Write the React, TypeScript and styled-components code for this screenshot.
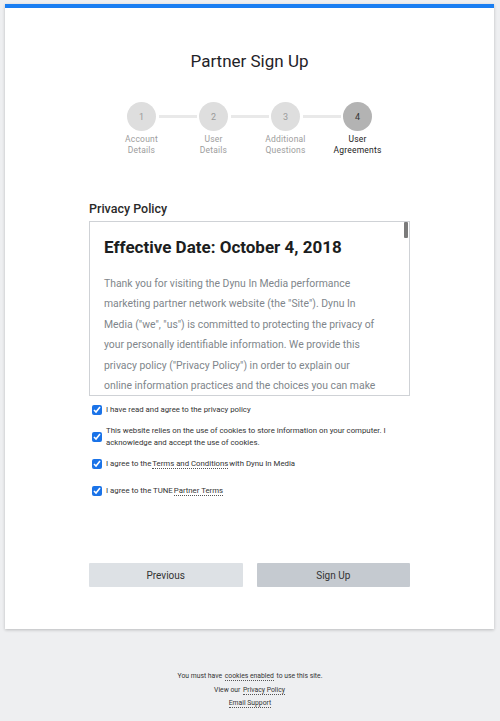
import styled, { createGlobalStyle } from 'styled-components';

const GlobalStyle = createGlobalStyle`
    html, body {
        margin: 0;
        padding: 0;
        background: #eeeff1;
        font-family: Roboto, 'Liberation Sans', sans-serif;
        color: #222;
    }
    * {
        box-sizing: border-box;
    }
`
const Card = styled.div`
    margin: 4px 6px 0 5px;
    background: #fff;
    border-top: 4px solid #1a7ef2;
    box-shadow: 0 1px 3px rgba(0, 0, 0, .22);
    padding: 43px 0 42px;
    display: flex;
    flex-direction: column;
    align-items: center;
`
const Title = styled.h1`
    margin: 0;
    font-size: 17px;
    font-weight: 400;
    line-height: 20px;
    color: #1f2328;
`
const Steps = styled.div`
    margin-top: 31px;
    display: grid;
    grid-template-columns: repeat(4, 72px);
`
const Step = styled.div<{ first?: boolean }>`
    position: relative;
    display: flex;
    flex-direction: column;
    align-items: center;
    &::before {
        content: '';
        display: ${props => props.first ? 'none' : 'block'};
        position: absolute;
        top: 13px;
        right: calc(50% + 17px);
        width: 38px;
        height: 3px;
        background: #e9e9e9;
    }
`
const Circle = styled.div<{ active?: boolean }>`
    width: 29px;
    height: 29px;
    border-radius: 50%;
    background: ${props => props.active ? '#b3b3b3' : '#dedede'};
    color: ${props => props.active ? '#333' : '#9a9a9a'};
    font-size: 9px;
    display: flex;
    align-items: center;
    justify-content: center;
`
const StepLabel = styled.div<{ active?: boolean }>`
    margin-top: 3px;
    font-size: 8.5px;
    line-height: 10.5px;
    text-align: center;
    color: ${props => props.active ? '#222' : '#9d9d9d'};
    letter-spacing: .2px;
`
const Content = styled.div`
    width: 321px;
    margin-top: 46px;
`
const SectionTitle = styled.h2`
    margin: 0 0 5px;
    font-size: 12.5px;
    font-weight: 500;
    line-height: 15px;
    color: #2a2a2a;
`
const PolicyFrame = styled.div`
    position: relative;
`
const PolicyBox = styled.div`
    height: 175px;
    border: 1px solid #cfd2d6;
    overflow-y: scroll;
    scrollbar-width: none;
    padding: 14px 30px 0 14px;
    &::-webkit-scrollbar {
        display: none;
    }
`
const ScrollThumb = styled.div`
    position: absolute;
    top: 1px;
    right: 2px;
    width: 4px;
    height: 16px;
    border-radius: 1px;
    background: #7b7b7b;
`
const PolicyHeading = styled.h3`
    margin: 0 0 16px;
    font-size: 17px;
    font-weight: 700;
    line-height: 22px;
    color: #1b1d20;
`
const PolicySubheading = styled.h4`
    margin: 10px 0 6px;
    font-size: 12px;
    font-weight: 700;
    line-height: 18px;
    color: #333;
`
const PolicyText = styled.p`
    margin: 0 0 10px;
    font-size: 10.4px;
    line-height: 20.4px;
    color: #80868b;
`
const Agreements = styled.div`
    margin-top: 8px;
    display: flex;
    flex-direction: column;
    gap: 9px;
    padding-left: 3px;
`
const Agreement = styled.label<{ spaced?: boolean }>`
    display: flex;
    align-items: center;
    gap: 4px;
    margin-top: ${props => props.spaced ? '6px' : '0'};
    font-size: 7.8px;
    line-height: 12px;
    color: #333;
`
const Check = styled.input`
    flex: none;
    width: 10px;
    height: 10px;
    margin: 0;
    accent-color: #1a73e8;
`
const DottedLink = styled.a`
    color: inherit;
    text-decoration: none;
    border-bottom: 1px dotted #555;
    margin: 0 1px;
`
const Buttons = styled.div`
    margin-top: 66px;
    display: grid;
    grid-template-columns: 1fr 1fr;
    gap: 14px;
`
const Button = styled.button<{ primary?: boolean }>`
    height: 24px;
    border: none;
    border-radius: 1px;
    background: ${props => props.primary ? '#c5cad0' : '#dde1e5'};
    color: #333;
    font-family: Roboto, 'Liberation Sans', sans-serif;
    font-size: 10px;
`
const Footer = styled.footer`
    padding: 41px 0 20px;
    display: flex;
    flex-direction: column;
    align-items: center;
    font-size: 6.8px;
    line-height: 13.5px;
    color: #333;
`

const steps = [
    { n: 1, label: ['Account', 'Details'] },
    { n: 2, label: ['User', 'Details'] },
    { n: 3, label: ['Additional', 'Questions'] },
    { n: 4, label: ['User', 'Agreements'] },
]

const policy = [
    { title: '', text: 'Thank you for visiting the Dynu In Media performance marketing partner network website (the "Site"). Dynu In Media ("we", "us") is committed to protecting the privacy of your personally identifiable information. We provide this privacy policy ("Privacy Policy") in order to explain our online information practices and the choices you can make about the way your information is collected and used.' },
    { title: 'Information We Collect', text: 'When you register as a partner, we collect information you provide to us, such as your name, company name, email address, mailing address, telephone number, tax information and payment details. We may also collect information about the websites, applications and other media through which you promote offers.' },
    { title: 'Automatically Collected Information', text: 'When you visit the Site, we and our service providers may automatically collect certain information about your device and usage, including your IP address, browser type, operating system, referring URLs, pages viewed, and the dates and times of your visits. We use cookies and similar technologies to collect this information.' },
    { title: 'How We Use Your Information', text: 'We use the information we collect to operate and maintain the partner network, to process your application, to track conversions and calculate payments, to communicate with you about your account, to provide support, to detect and prevent fraud, and to improve the Site and our services.' },
    { title: 'Sharing of Information', text: 'We may share your information with advertisers whose offers you promote, with service providers that perform services on our behalf, including our tracking platform provider, and where required by law or to protect the rights, property or safety of Dynu In Media, our partners or others.' },
    { title: 'Cookies', text: 'The Site relies on cookies to store information on your computer. Cookies are required to log in to the partner network and to attribute activity to your account. You may be able to disable cookies in your browser settings, but doing so may prevent the Site from functioning properly.' },
    { title: 'Data Security', text: 'We take reasonable measures to protect the information we collect from loss, theft, misuse and unauthorized access, disclosure, alteration and destruction. However, no internet transmission or electronic storage is ever completely secure, and we cannot guarantee the security of your information.' },
    { title: 'Your Choices', text: 'You may review and update your account information at any time by logging in to your account. You may also contact us to request access to, correction of, or deletion of your personal information, subject to our legitimate business and legal obligations.' },
    { title: 'Changes to This Privacy Policy', text: 'We may update this Privacy Policy from time to time. When we do, we will revise the effective date at the top of this page. We encourage you to review this Privacy Policy periodically to stay informed about how we protect your information.' },
    { title: 'Contact Us', text: 'If you have any questions about this Privacy Policy or our information practices, please contact us through the email support link provided at the bottom of this page.' },
]

function App() {
    return (
        <>
            <GlobalStyle />
            <Card>
                <Title>Partner Sign Up</Title>
                <Steps>
                    {
                        steps.map((step, i) => {
                            const active = step.n === 4;
                            return (
                                <Step key={step.n} first={i === 0}>
                                    <Circle active={active}>{step.n}</Circle>
                                    <StepLabel active={active}>{step.label[0]}<br />{step.label[1]}</StepLabel>
                                </Step>
                            )
                        })
                    }
                </Steps>
                <Content>
                    <SectionTitle>Privacy Policy</SectionTitle>
                    <PolicyFrame>
                        <PolicyBox>
                            <PolicyHeading>Effective Date: October 4, 2018</PolicyHeading>
                            {
                                policy.map((p, i) => (
                                    <div key={i}>
                                        {p.title && <PolicySubheading>{p.title}</PolicySubheading>}
                                        <PolicyText>{p.text}</PolicyText>
                                    </div>
                                ))
                            }
                        </PolicyBox>
                        <ScrollThumb />
                    </PolicyFrame>
                    <Agreements>
                        <Agreement>
                            <Check type="checkbox" defaultChecked />
                            <span>I have read and agree to the privacy policy</span>
                        </Agreement>
                        <Agreement>
                            <Check type="checkbox" defaultChecked />
                            <span>This website relies on the use of cookies to store information on your computer. I acknowledge and accept the use of cookies.</span>
                        </Agreement>
                        <Agreement>
                            <Check type="checkbox" defaultChecked />
                            <span>I agree to the<DottedLink href="#">Terms and Conditions</DottedLink>with Dynu In Media</span>
                        </Agreement>
                        <Agreement spaced>
                            <Check type="checkbox" defaultChecked />
                            <span>I agree to the TUNE<DottedLink href="#">Partner Terms</DottedLink></span>
                        </Agreement>
                    </Agreements>
                    <Buttons>
                        <Button>Previous</Button>
                        <Button primary>Sign Up</Button>
                    </Buttons>
                </Content>
            </Card>
            <Footer>
                <div>You must have <DottedLink href="#">cookies enabled</DottedLink> to use this site.</div>
                <div>View our <DottedLink href="#">Privacy Policy</DottedLink></div>
                <div><DottedLink href="#">Email Support</DottedLink></div>
            </Footer>
        </>
    )
}

export default App;
